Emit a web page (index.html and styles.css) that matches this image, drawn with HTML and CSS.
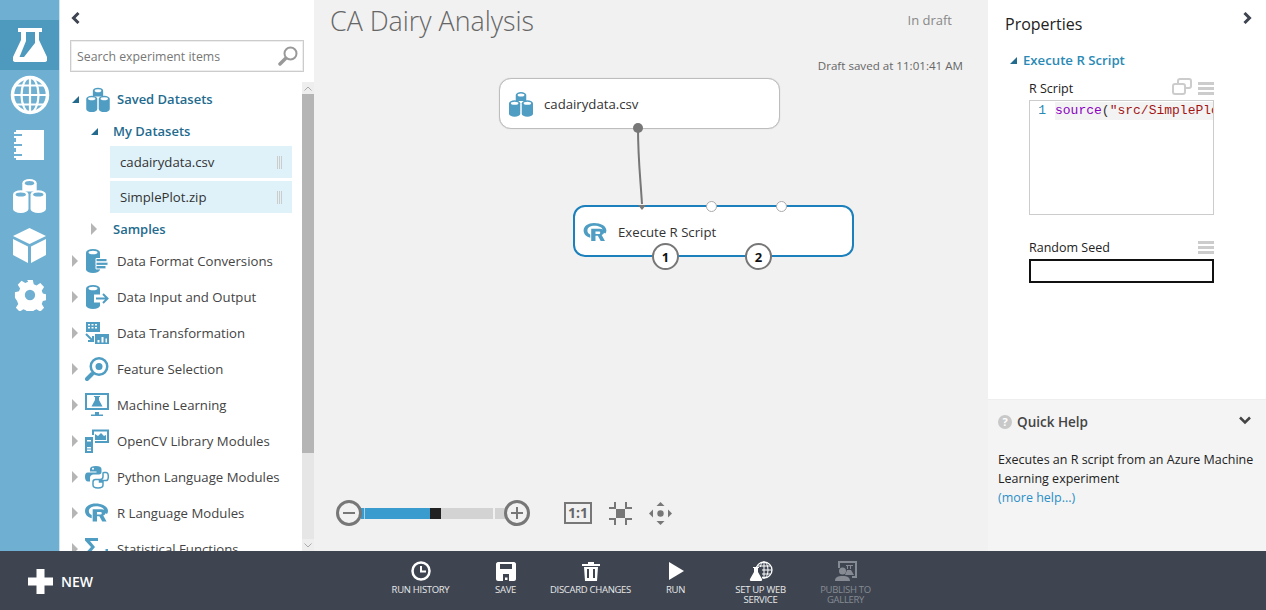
FILE: index.html
```html
<!doctype html>
<html lang="en">
<head>
	<meta charset="UTF-8">
	<title>CA Dairy Analysis</title>
	<link rel="stylesheet" href="styles.css">
</head>
<body>
	<svg class="defs" width="0" height="0">
		<symbol id="i-cyl" viewBox="0 0 32 34">
			<path d="M9 5a7 4 0 0 1 14 0v8H9z"/>
			<ellipse cx="16" cy="5" rx="4.5" ry="2" fill="var(--cap)"/>
			<path d="M0 16a7.500 4 0 0 1 15 0v14a7.500 4 0 0 1-15 0z"/>
			<path d="M17 16a7.500 4 0 0 1 15 0v14a7.500 4 0 0 1-15 0z"/>
			<ellipse cx="7.500" cy="16" rx="5" ry="2" fill="var(--cap)"/>
			<ellipse cx="24.500" cy="16" rx="5" ry="2" fill="var(--cap)"/>
		</symbol>
		<symbol id="i-r" viewBox="0 0 24 20">
			<path fill-rule="evenodd" d="M11 0C5 0 0 3 0 8c0 4 3 6.500 7 7.500V12c-2-.6-3-2-3-4 0-3 3-5 7.500-5S20 4.500 20 8c0 .5 0 1-.2 1.500L23 11c.6-1 1-2 1-3 0-5-6-8-13-8z"/>
			<path fill-rule="evenodd" d="M8 6h9c3 0 4.500 1.500 4.500 3.500 0 1.500-1 2.700-2.500 3.200l3.500 6.300h-4.500l-3-5.700h-2.500V19H8zm4.500 3v2.500h3.500c1 0 1.500-.5 1.500-1.300S17 9 16 9z"/>
		</symbol>
	</svg>

	<div class="app">
		<nav class="rail">
			<a class="rail-item active" href="#">
				<svg width="34" height="36" viewBox="0 0 34 36"><path fill="#fff" fill-rule="evenodd" d="M5 1h24v4h-3v8l8 17c1 3 0 5-3 5H3c-3 0-4-2-3-5l8-17V5H5zm8 4v9L6.500 30H11l11-14V5z"/></svg>
			</a>
			<a class="rail-item" href="#">
				<svg width="40" height="40" viewBox="0 0 40 40" fill="none" stroke="#fff"><circle cx="20" cy="20" r="17.500" stroke-width="3.500"/><ellipse cx="20" cy="20" rx="8.500" ry="17.500" stroke-width="2.200"/><path stroke-width="2.200" d="M20 2v36M2 20h36M5 10.500h30M5 29.500h30"/></svg>
			</a>
			<a class="rail-item" href="#">
				<svg width="32" height="32" viewBox="0 0 32 32">
					<rect x="2" y="1" width="28" height="30" fill="#fff"/>
					<path fill="none" stroke="#fff" stroke-width="2" d="M0 4h3M0 8h3M0 14h3M0 18h3M0 24h3M0 28h3"/>
					<path fill="none" stroke="#6FB0D2" stroke-width="2" d="M0 6h8M0 16h8M0 26h8M2 11h0"/>
				</svg>
			</a>
			<a class="rail-item cyl-white" href="#">
				<svg width="33" height="35"><use href="#i-cyl"/></svg>
			</a>
			<a class="rail-item" href="#">
				<svg width="33" height="35" viewBox="0 0 33 35"><path fill="#fff" d="M16.500 0L33 8 16.500 16 0 8zM0 11l15 7.500V35L0 27zM33 11l-15 7.500V35l15-8z"/></svg>
			</a>
			<a class="rail-item" href="#">
				<svg width="32" height="32" viewBox="0 0 32 32"><path fill="#fff" fill-rule="evenodd" d="M13 0h6l1 4.500 3 1.300 4-2.500 4 4.200-2.500 4 1.200 3 4.300 1v6l-4.300 1-1.200 3 2.500 4-4 4.200-4-2.500-3 1.300-1 4.500h-6l-1-4.500-3-1.300-4 2.500-4-4.200 2.500-4-1.200-3L0 19v-6l4.300-1 1.200-3-2.500-4 4-4.200 4 2.500 3-1.300zM16 10.500a5.500 5.500 0 1 0 0 11 5.500 5.500 0 0 0 0-11z" transform="scale(.94) translate(1 1)"/></svg>
			</a>
		</nav>

		<aside class="palette">
			<div class="palette-head">
				<svg class="back" width="9" height="12" viewBox="0 0 9 12"><path fill="none" stroke="#3e4551" stroke-width="3" d="M7.500 1L2.500 6l5 5"/></svg>
				<div class="search">
					<span>Search experiment items</span>
					<svg width="20" height="20" viewBox="0 0 20 20" fill="none" stroke="#999"><circle cx="12.500" cy="7.500" r="6" stroke-width="2"/><path stroke-width="3.500" stroke-linecap="round" d="M7.500 12.500L2 18"/></svg>
				</div>
			</div>
			<div class="palette-body">
				<div class="tree">
					<div class="row head">
						<i class="open"></i>
						<svg class="ico cyl-blue" width="24" height="25"><use href="#i-cyl"/></svg>
						<b>Saved Datasets</b>
					</div>
					<div class="sub head">
						<i class="open"></i>
						<b>My Datasets</b>
					</div>
					<div class="file first">cadairydata.csv<span class="grip"></span></div>
					<div class="file">SimplePlot.zip<span class="grip"></span></div>
					<div class="sub head samples">
						<i class="shut"></i>
						<b>Samples</b>
					</div>
					<div class="row">
						<i class="shut"></i>
						<svg class="ico" width="24" height="24" viewBox="0 0 24 24"><path d="M1 3.500a7 3.500 0 0 1 14 0v17a7 3.500 0 0 1-14 0z"/><ellipse cx="8" cy="3.500" rx="4.500" ry="1.800" fill="#fff"/><path stroke="#fff" stroke-width="1" d="M11 9.500h11v3.400H11zM11 13h12v3.400H11zM11 16.500h10v3.400H11z"/></svg>
						<span>Data Format Conversions</span>
					</div>
					<div class="row">
						<i class="shut"></i>
						<svg class="ico" width="24" height="24" viewBox="0 0 24 24"><path d="M1 3.500a7 3.500 0 0 1 14 0v17a7 3.500 0 0 1-14 0z"/><ellipse cx="8" cy="3.500" rx="4.500" ry="1.800" fill="#fff"/><path fill="#fff" d="M9 9.500h15v8H9z"/><path fill="none" stroke="#4f9dc2" stroke-width="2" d="M11 13.500h11M18 9l4.500 4.500L18 18"/></svg>
						<span>Data Input and Output</span>
					</div>
					<div class="row">
						<i class="shut"></i>
						<svg class="ico" width="24" height="24" viewBox="0 0 24 24"><path fill-rule="evenodd" d="M1 1h14v10H1zm2 2v1.500h2V3zm3.500 0v1.500h2V3zM10 3v1.500h2V3zM3 6v1.500h2V6zm3.500 0v1.500h2V6zM10 6v1.500h2V6z"/><path fill-rule="evenodd" d="M10 13h14v10H10zm2.500 6v2.500h2V19zm4-3v5.500h2V16zm4 1.500v4h1.500v-4z"/><path fill="none" stroke="#4f9dc2" stroke-width="2" d="M1 13l6.500 6.500M3 20h5v-5"/></svg>
						<span>Data Transformation</span>
					</div>
					<div class="row">
						<i class="shut"></i>
						<svg class="ico" width="24" height="24" viewBox="0 0 24 24"><path fill-rule="evenodd" d="M14 0a9.500 9.500 0 1 1 0 19 9.500 9.500 0 0 1 0-19zm0 2.500a7 7 0 1 0 0 14 7 7 0 0 0 0-14z"/><circle cx="14" cy="9.500" r="3.500"/><path stroke="#4f9dc2" stroke-width="4" stroke-linecap="round" d="M7 17l-5 5"/></svg>
						<span>Feature Selection</span>
					</div>
					<div class="row">
						<i class="shut"></i>
						<svg class="ico" width="24" height="24" viewBox="0 0 24 24"><path fill-rule="evenodd" d="M0 0h24v17H0zm2 2v13h20V2zM10 19h4v2.500h4V23H6v-1.500h4z"/><path d="M9 3h6v1h-1v3l3.500 6.500h-11L10 7V4H9z"/></svg>
						<span>Machine Learning</span>
					</div>
					<div class="row">
						<i class="shut"></i>
						<svg class="ico" width="24" height="24" viewBox="0 0 24 24"><path fill-rule="evenodd" d="M0 8h8v16H0zm2 3v1.500h4V11zm0 7v1.500h4V18zm0 2.500V22h4v-1.500z"/><path fill-rule="evenodd" d="M7 .5h17V14H10v-2h12V2.500H9V6H7z"/><path d="M10 11V5l3 2 3-3 3 3 2-1v5z"/></svg>
						<span>OpenCV Library Modules</span>
					</div>
					<div class="row">
						<i class="shut"></i>
						<svg class="ico" width="24" height="24" viewBox="0 0 24 24"><path d="M11 1c-4 0-6 1-6 3v2.500h6.500v1H3c-2.500 0-3 2-3 4.500s1 4.500 3 4.500h2V13c0-2 1.500-3.500 3.500-3.500h5.500c1.500 0 2.500-1 2.500-2.500V4c0-2-2-3-5.500-3z"/><circle cx="8" cy="3.700" r="1" fill="#fff"/><path fill="none" stroke="#4f9dc2" stroke-width="1.500" d="M19 7.500h2c1.500 0 2.300 2 2.300 4s-.8 4-2.300 4h-6.500v1.500H18V20c0 2-2 3-5 3s-5-1-5-3v-3c0-1.500 1-2.500 2.500-2.500H15c2 0 3-1 3-3V8z"/></svg>
						<span>Python Language Modules</span>
					</div>
					<div class="row">
						<i class="shut"></i>
						<svg class="ico" width="23" height="20"><use href="#i-r"/></svg>
						<span>R Language Modules</span>
					</div>
					<div class="row">
						<i class="shut"></i>
						<svg class="ico" width="24" height="24" viewBox="0 0 24 24"><path d="M0 1h13v3H5l5 6-5 6h8v3H0v-2.500L6 10 0 3.500zM15 15h2.500v4H15zM20.500 12H23v7h-2.500z"/></svg>
						<span>Statistical Functions</span>
					</div>
				</div>
				<div class="scrollbar">
					<div class="sb-btn"><svg width="8" height="5" viewBox="0 0 8 5"><path fill="none" stroke="#aaa" d="M.5 4.500L4 1l3.500 3.500"/></svg></div>
					<div class="sb-thumb"></div>
					<div class="sb-track"></div>
					<div class="sb-btn"><svg width="8" height="5" viewBox="0 0 8 5"><path fill="none" stroke="#aaa" d="M.5.500L4 4 7.500.500"/></svg></div>
				</div>
			</div>
		</aside>

		<main class="canvas">
			<header class="canvas-head">
				<h1>CA Dairy Analysis</h1>
				<span class="state">In draft</span>
			</header>
			<p class="saved">Draft saved at 11:01:41 AM</p>

			<div class="node node-data">
				<svg class="ico cyl-blue" width="24" height="26"><use href="#i-cyl"/></svg>
				<span>cadairydata.csv</span>
			</div>
			<div class="node node-script">
				<svg class="ico" width="24" height="19"><use href="#i-r"/></svg>
				<span>Execute R Script</span>
				<i class="port p1"></i>
				<i class="port p2"></i>
				<b class="out o1">1</b>
				<b class="out o2">2</b>
			</div>
			<svg class="wire" width="20" height="92" viewBox="0 0 20 92"><path fill="none" stroke="#777" stroke-width="2" d="M5 5c0 30 2 45 4 76"/><circle cx="5" cy="5" r="5" fill="#777"/><path fill="#777" d="M5 82h8l-4 5z"/></svg>

			<div class="zoom">
				<div class="zoom-bar">
					<span class="zoom-btn">
						<svg width="12" height="2"><path stroke="#777" stroke-width="4" d="M0 1h12"/></svg>
					</span>
					<div class="slider">
						<span class="fill"></span>
						<span class="knob"></span>
						<span class="rest"></span>
					</div>
					<span class="zoom-btn">
						<svg width="12" height="12"><path stroke="#777" stroke-width="2" d="M0 6h12M6 0v12"/></svg>
					</span>
				</div>
				<span class="one">1:1</span>
				<svg class="fit" width="23" height="23" viewBox="0 0 23 23" fill="none" stroke="#777" stroke-width="2"><path d="M6 0v6H0M17 0v6h6M6 23v-6H0M17 23v-6h6"/><rect x="7" y="7" width="9" height="9" fill="#777" stroke="none"/></svg>
				<svg class="pan" width="23" height="23" viewBox="0 0 23 23" fill="#777"><path d="M11.500 0l4 4h-8zM11.500 23l-4-4h8zM0 11.500l4-4v8zM23 11.500l-4 4v-8z"/><circle cx="11.500" cy="11.500" r="3.200"/></svg>
			</div>
		</main>

		<aside class="side">
			<section class="props">
				<div class="props-title">
					<h2>Properties</h2>
					<svg width="9" height="12" viewBox="0 0 9 12"><path fill="none" stroke="#3e4551" stroke-width="3" d="M1.500 1l5 5-5 5"/></svg>
				</div>
				<div class="prop-group">
					<i class="open"></i>
					<b>Execute R Script</b>
				</div>
				<div class="field script">
					<div class="field-head">
						<label>R Script</label>
						<svg width="20" height="17" viewBox="0 0 20 17" fill="none" stroke="#ccc" stroke-width="2"><rect x="6" y="1" width="13" height="9" rx="2"/><rect x="1" y="6" width="12" height="10" rx="2" fill="#fff"/></svg>
						<span class="lines"></span>
					</div>
					<div class="code">
						<span class="num">1</span>
						<div class="line"><span class="kw">source</span>(<span class="str">"src/SimplePlot.R"</span>)</div>
					</div>
				</div>
				<div class="field seed">
					<div class="field-head">
						<label>Random Seed</label>
						<span class="lines"></span>
					</div>
					<div class="seed-box"></div>
				</div>
			</section>
			<section class="help">
				<div class="help-title">
					<span class="q">?</span>
					<b>Quick Help</b>
					<svg width="12" height="9" viewBox="0 0 12 9"><path fill="none" stroke="#444" stroke-width="2.500" d="M1 1.500l5 5 5-5"/></svg>
				</div>
				<p>Executes an R script from an Azure Machine Learning experiment<br><a href="#">(more help...)</a></p>
			</section>
		</aside>

		<footer class="bar">
			<a class="new" href="#">
				<svg width="25" height="25" viewBox="0 0 25 25"><path fill="#fff" d="M8.500 0h8v8.500H25v8h-8.500V25h-8v-8.500H0v-8h8.500z"/></svg>
				<span>NEW</span>
			</a>
			<div class="actions">
				<a class="act" href="#">
					<svg width="20" height="20" viewBox="0 0 20 20" fill="none" stroke="#fff"><circle cx="10" cy="10" r="8.500" stroke-width="2.500"/><path stroke-width="2" d="M10 5v5.500h5"/></svg>
					<span>RUN HISTORY</span>
				</a>
				<a class="act" href="#">
					<svg width="20" height="20" viewBox="0 0 20 20"><path fill="#fff" fill-rule="evenodd" d="M2 1h16c1 0 2 1 2 2v15c0 1-1 2-2 2H2c-1 0-2-1-2-2V3c0-1 1-2 2-2zm2 2v5h12V3zm3 10v7h6v-7zm2 3.500h2.500V19H9z"/></svg>
					<span>SAVE</span>
				</a>
				<a class="act" href="#">
					<svg width="18" height="20" viewBox="0 0 18 20"><path fill="#fff" fill-rule="evenodd" d="M0 3h6V1h6v2h6v2H0zM2 6h14l-1 14H3zm3 2v9h2V8zm6 0v9h2V8z"/></svg>
					<span>DISCARD CHANGES</span>
				</a>
				<a class="act" href="#">
					<svg width="16" height="20" viewBox="0 0 16 20"><path fill="#fff" d="M1 1l15 9-15 9z"/></svg>
					<span>RUN</span>
				</a>
				<a class="act two" href="#">
					<svg width="24" height="20" viewBox="0 0 24 20"><g fill="none" stroke="#fff"><circle cx="15" cy="9" r="8" stroke-width="1.300"/><ellipse cx="15" cy="9" rx="4" ry="8"/><path d="M15 1v16M7 9h16M8.500 5h13M8.500 13h13"/></g><path fill="#3e4551" d="M0 6h13v14H0z"/><path fill="#fff" d="M4 6h6v1H9v4l4 7c.4 1 0 2-1 2H2c-1 0-1.400-1-1-2l4-7V7H4z"/></svg>
					<span>SET UP WEB SERVICE</span>
				</a>
				<a class="act two off" href="#">
					<svg width="22" height="20" viewBox="0 0 22 20"><path fill="#868b93" fill-rule="evenodd" d="M3 0h19v17h-5v-2h3V2H5v5H3z"/><circle cx="7.500" cy="10" r="3.500" fill="#868b93"/><path fill="#868b93" d="M0 20c0-4 3-5 7.500-5s7.500 1 7.500 5zM11 4h7v1h-2v3h-1V5h-2v3h-1V5h-1zM12 9h4l3 5h-9z"/></svg>
					<span>PUBLISH TO GALLERY</span>
				</a>
			</div>
		</footer>
	</div>
</body>
</html>
```

FILE: styles.css
```css
*{
	box-sizing: border-box;
}
html,body{
	margin: 0;
	height: 100%;
	overflow: hidden;
}
body{
	font-family: "Open Sans", "Liberation Sans", sans-serif;
	font-size: 13.2px;
	color: #444;
}
a{
	text-decoration: none;
	color: inherit;
}
h1,h2,p{
	margin: 0;
	font-weight: normal;
}
.defs{
	position: absolute;
}
.app{
	display: grid;
	grid-template-columns: 60px 255px 673px 1fr;
	grid-template-rows: 551px 59px;
	height: 610px;
}

/* left rail */
.rail{
	background-color: #6FB0D2;
	border-right: 1px solid #cfe3ee;
	padding-top: 20px;
	display: flex;
	flex-direction: column;
}
.rail-item{
	height: 50px;
	display: flex;
	align-items: center;
	justify-content: center;
}
.rail-item.active{
	background-color: #4E9ABF;
}
.cyl-white{
	color: #fff;
	--cap: #6FB0D2;
	fill: #fff;
}
.cyl-blue{
	--cap: #fff;
}
.ico{
	fill: #4f9dc2;
	flex: none;
}

/* palette */
.palette{
	background-color: #fff;
	display: flex;
	flex-direction: column;
	overflow: hidden;
	border-right: 1px solid #f1f1f1;
}
.palette-head{
	height: 81px;
	padding: 12px 10px 0 10px;
}
.back{
	display: block;
	margin-left: 1px;
}
.search{
	width: 234px;
	height: 32px;
	margin-top: 16px;
	border: 1px solid #ccc;
	box-shadow: inset 0 0 0 1px #eee;
	padding: 0 5px 0 6px;
	display: flex;
	align-items: center;
	justify-content: space-between;
	color: #777;
	font-size: 12.3px;
}
.palette-body{
	flex: 1;
	display: flex;
	min-height: 0;
}
.tree{
	flex: 1;
	overflow: hidden;
}
.row{
	height: 36px;
	padding-left: 12px;
	display: flex;
	align-items: center;
}
.row .ico{
	margin-left: 7px;
	margin-right: 8px;
}
.row svg[width="23"]{
	margin-right: 9px;
}
.head{
	color: #236b8e;
}
.head b,.prop-group b,.help-title b{
	font-weight: 600;
}
.head b{
	font-size: 13px;
}
.row.head .ico{
	margin-right: 7px;
}
.sub{
	height: 28px;
	padding-left: 31px;
	display: flex;
	align-items: center;
}
.sub b{
	margin-left: 15px;
}
.samples{
	margin-top: 2px;
}
.open{
	width: 0;
	height: 0;
	flex: none;
	border-style: solid;
	border-width: 0 0 7px 7px;
	border-color: transparent transparent #236b8e transparent;
}
.shut{
	width: 0;
	height: 0;
	flex: none;
	border-style: solid;
	border-width: 6px 0 6px 6px;
	border-color: transparent transparent transparent #b5b5b5;
}
.samples b{
	margin-left: 16px;
}
.file{
	width: 182px;
	height: 32px;
	margin: 3px 0 0 50px;
	padding: 0 10px;
	background-color: #DFF2FA;
	color: #333;
	display: flex;
	align-items: center;
	justify-content: space-between;
}
.file.first{
	margin-top: 1px;
}
.grip{
	width: 5px;
	height: 13px;
	background: repeating-linear-gradient(90deg, #ccc 0, #ccc 1px, transparent 1px, transparent 2px);
}
.scrollbar{
	width: 12px;
	margin-top: 1px;
	background-color: #e6e6e6;
	display: flex;
	flex-direction: column;
}
.sb-btn{
	height: 12px;
	background-color: #eee;
	display: flex;
	align-items: center;
	justify-content: center;
}
.sb-thumb{
	height: 359px;
	background-color: #b5b5b5;
}
.sb-track{
	flex: 1;
}

/* canvas */
.canvas{
	background-color: #F1F1F1;
	position: relative;
	overflow: hidden;
}
.canvas-head{
	display: flex;
	justify-content: space-between;
	align-items: center;
	padding: 0 36px 0 15px;
	height: 40px;
}
h1{
	font-size: 26.8px;
	font-weight: 300;
	color: #666;
}
.state{
	color: #888;
	font-size: 13px;
}
.saved{
	font-size: 11.6px;
	color: #666;
	text-align: right;
	padding: 18px 25px 0 0;
}
.node{
	position: absolute;
	display: flex;
	align-items: center;
	background-color: #fff;
	color: #333;
	border-radius: 12px;
}
.node-data{
	left: 184px;
	top: 78px;
	width: 281px;
	height: 51px;
	border: 1px solid #bdbdbd;
	box-shadow: 0 0 1px #bdbdbd;
	padding-left: 9px;
	gap: 11px;
}
.node-script{
	left: 258px;
	top: 205px;
	width: 281px;
	height: 52px;
	border: 2px solid #1B80BB;
	padding: 2px 0 0 8px;
	gap: 11px;
}
.wire{
	position: absolute;
	left: 318px;
	top: 123px;
}
.port{
	position: absolute;
	top: -6px;
	width: 11px;
	height: 11px;
	border-radius: 50%;
	background-color: #fff;
	border: 1px solid #aaa;
}
.p1{
	left: 131px;
}
.p2{
	left: 201px;
}
.out{
	position: absolute;
	bottom: -15px;
	width: 27px;
	height: 27px;
	border-radius: 50%;
	background-color: #fff;
	border: 2px solid #777;
	color: #111;
	font-size: 13px;
	font-weight: 700;
	display: flex;
	align-items: center;
	justify-content: center;
}
.o1{
	left: 77px;
}
.o2{
	left: 170px;
}
.zoom{
	position: absolute;
	left: 21px;
	top: 500px;
	display: flex;
	align-items: center;
}
.zoom-bar{
	display: flex;
	align-items: center;
}
.zoom-btn{
	width: 26px;
	height: 26px;
	border: 3px solid #777;
	border-radius: 50%;
	display: flex;
	align-items: center;
	justify-content: center;
	background-color: #f1f1f1;
	z-index: 1;
}
.slider{
	width: 144px;
	height: 11px;
	margin: 0 -1px;
	display: flex;
}
.fill{
	width: 69px;
	background: linear-gradient(90deg, #3A9BCF 3px, #a8d2e8 3px, #a8d2e8 4px, #3A9BCF 4px);
}
.knob{
	width: 11px;
	background-color: #222;
}
.rest{
	flex: 1;
	background: linear-gradient(90deg, #D3D3D3 52px, #f1f1f1 52px, #f1f1f1 54px, #D3D3D3 54px);
}
.one{
	width: 28px;
	height: 22px;
	margin-left: 34px;
	border: 2px solid #777;
	color: #666;
	font-size: 14px;
	font-weight: 700;
	line-height: 17px;
	text-align: center;
}
.fit{
	margin-left: 17px;
}
.pan{
	margin-left: 17px;
}

/* right side */
.side{
	display: flex;
	flex-direction: column;
	background-color: #fff;
}
.props{
	height: 400px;
	border-bottom: 1px solid #eee;
	padding: 0 0 0 17px;
}
.props-title{
	display: flex;
	justify-content: space-between;
	padding: 12px 14px 0 0;
	height: 50px;
}
h2{
	font-size: 16px;
	line-height: 24px;
	color: #222;
}
.prop-group{
	display: flex;
	align-items: center;
	gap: 6px;
	height: 20px;
	color: #2B8AB5;
	padding-left: 5px;
}
.prop-group .open{
	border-bottom-color: #236b8e;
}
.field{
	width: 185px;
	margin-left: 24px;
}
.script{
	margin-top: 8px;
}
.field-head{
	display: flex;
	align-items: center;
	height: 20px;
	color: #222;
	font-size: 12.500px;
}
.field-head label{
	flex: 1;
}
.field-head svg{
	margin-right: 6px;
	margin-top: -3px;
}
.lines{
	width: 16px;
	height: 13px;
	background: repeating-linear-gradient(180deg, #ccc 0, #ccc 3px, transparent 3px, transparent 5px);
}
.code{
	height: 115px;
	margin-top: 2px;
	border: 1px solid #ccc;
	display: flex;
	padding-top: 1px;
	overflow: hidden;
	font-family: "Liberation Mono", monospace;
	font-size: 13px;
	line-height: 18px;
	color: #333;
}
.num{
	width: 25px;
	flex: none;
	text-align: right;
	padding-right: 9px;
	color: #2B8AB5;
}
.line{
	flex: 1;
	height: 18px;
	background-color: #f3f3f3;
	white-space: nowrap;
	overflow: hidden;
}
.kw{
	color: #8A00C2;
}
.str{
	color: #A31515;
}
.seed{
	margin-top: 22px;
}
.seed-box{
	height: 24px;
	margin-top: 2px;
	border: 2px solid #111;
}
.help{
	flex: 1;
	background-color: #F4F4F4;
	padding: 0 10px;
}
.help-title{
	display: flex;
	align-items: center;
	height: 44px;
	color: #444;
	font-size: 13.500px;
}
.help-title svg{
	margin-left: auto;
	margin-top: -4px;
	margin-right: 5px;
}
.q{
	width: 14px;
	height: 14px;
	margin-right: 5px;
	border-radius: 50%;
	background-color: #c8c8c8;
	color: #fff;
	font-size: 11px;
	font-weight: 700;
	line-height: 14px;
	text-align: center;
}
.help p{
	margin-top: 6px;
	font-size: 12.500px;
	line-height: 19px;
	color: #222;
}
.help a{
	color: #2B8FC7;
}

/* bottom bar */
.bar{
	grid-column: 1 / -1;
	background-color: #3E4551;
	display: grid;
	grid-template-columns: 1fr auto 1fr;
	color: #fff;
}
.new{
	display: flex;
	align-items: center;
	gap: 8px;
	padding: 2px 0 0 28px;
	font-size: 14px;
	font-weight: 600;
}
.actions{
	display: flex;
}
.act{
	width: 85px;
	padding-top: 10px;
	display: flex;
	flex-direction: column;
	align-items: center;
	font-size: 9.500px;
	line-height: 10px;
	letter-spacing: -.3px;
	text-align: center;
	color: #e8e8e8;
}
.act svg{
	height: 20px;
	margin-bottom: 4px;
	flex: none;
}
.act.two span{
	width: 60px;
}
.act.off{
	color: #868b93;
}
```
